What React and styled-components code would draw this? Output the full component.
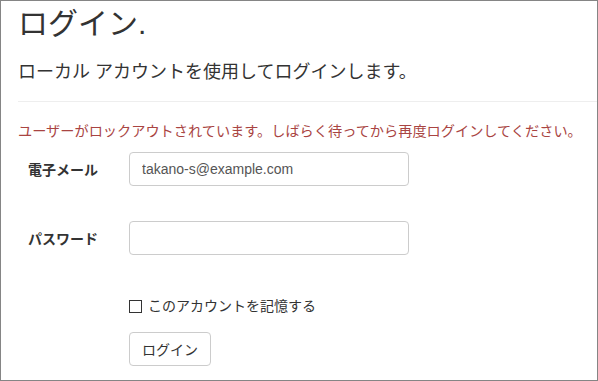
import styled, { createGlobalStyle } from "styled-components";

const GlobalStyle = createGlobalStyle`
  html, body {
    margin: 0;
    padding: 0;
    background: #fff;
  }
  body {
    font-family: "Liberation Sans", "Noto Sans CJK JP", sans-serif;
    color: #333;
  }
  * {
    box-sizing: border-box;
  }
`;

const Frame = styled.div`
  width: 598px;
  height: 381px;
  border: 1px solid #858585;
  overflow: hidden;
  background: #fff;
`;

const Content = styled.div`
  padding-left: 17px;
`;

const Title = styled.h2`
  margin: 6px 0 0;
  font-size: 30px;
  font-weight: 400;
  line-height: 33px;
  color: #333;
`;

const SubTitle = styled.h4`
  margin: 22px 0 0;
  font-size: 18px;
  font-weight: 400;
  line-height: 20px;
  color: #333;
`;

const Divider = styled.hr`
  margin: 19px 0 0;
  border: 0;
  border-top: 1px solid #eee;
`;

const ErrorText = styled.div`
  margin-top: 19px;
  font-size: 14.2px;
  line-height: 20px;
  color: #a94442;
  white-space: nowrap;
`;

const Row = styled.div`
  display: flex;
  align-items: center;
  margin-top: ${(p) => p.$gap}px;
`;

const Label = styled.label`
  width: 111px;
  padding-left: 10px;
  font-size: 14px;
  font-weight: 700;
  color: #333;
`;

const Input = styled.input`
  width: 280px;
  height: 34px;
  padding: 6px 12px;
  font-family: "Liberation Sans", "Noto Sans CJK JP", sans-serif;
  font-size: 14px;
  color: #555;
  background: #fff;
  border: 1px solid #ccc;
  border-radius: 4px;
  outline: none;
`;

const Offset = styled.div`
  margin-left: 111px;
  margin-top: ${(p) => p.$gap}px;
`;

const CheckLabel = styled.label`
  display: flex;
  align-items: center;
  gap: 6px;
  font-size: 14px;
  line-height: 20px;
  color: #333;
`;

const CheckBox = styled.span`
  display: inline-block;
  width: 13px;
  height: 13px;
  border: 1px solid #333;
  background: #fff;
`;

const Button = styled.button`
  width: 82px;
  height: 34px;
  padding: 0;
  font-family: "Liberation Sans", "Noto Sans CJK JP", sans-serif;
  font-size: 14px;
  color: #333;
  background: #fff;
  border: 1px solid #ccc;
  border-radius: 4px;
`;

export default function App() {
  return (
    <>
      <GlobalStyle />
      <Frame>
        <Content>
          <Title>ログイン.</Title>
          <SubTitle>ローカル アカウントを使用してログインします。</SubTitle>
          <Divider />
          <ErrorText>
            ユーザーがロックアウトされています。しばらく待ってから再度ログインしてください。
          </ErrorText>
          <Row $gap={11}>
            <Label>電子メール</Label>
            <Input type="text" defaultValue="takano-s@example.com" />
          </Row>
          <Row $gap={35}>
            <Label>パスワード</Label>
            <Input type="password" />
          </Row>
          <Offset $gap={41}>
            <CheckLabel>
              <CheckBox />
              このアカウントを記憶する
            </CheckLabel>
          </Offset>
          <Offset $gap={16}>
            <Button>ログイン</Button>
          </Offset>
        </Content>
      </Frame>
    </>
  );
}
